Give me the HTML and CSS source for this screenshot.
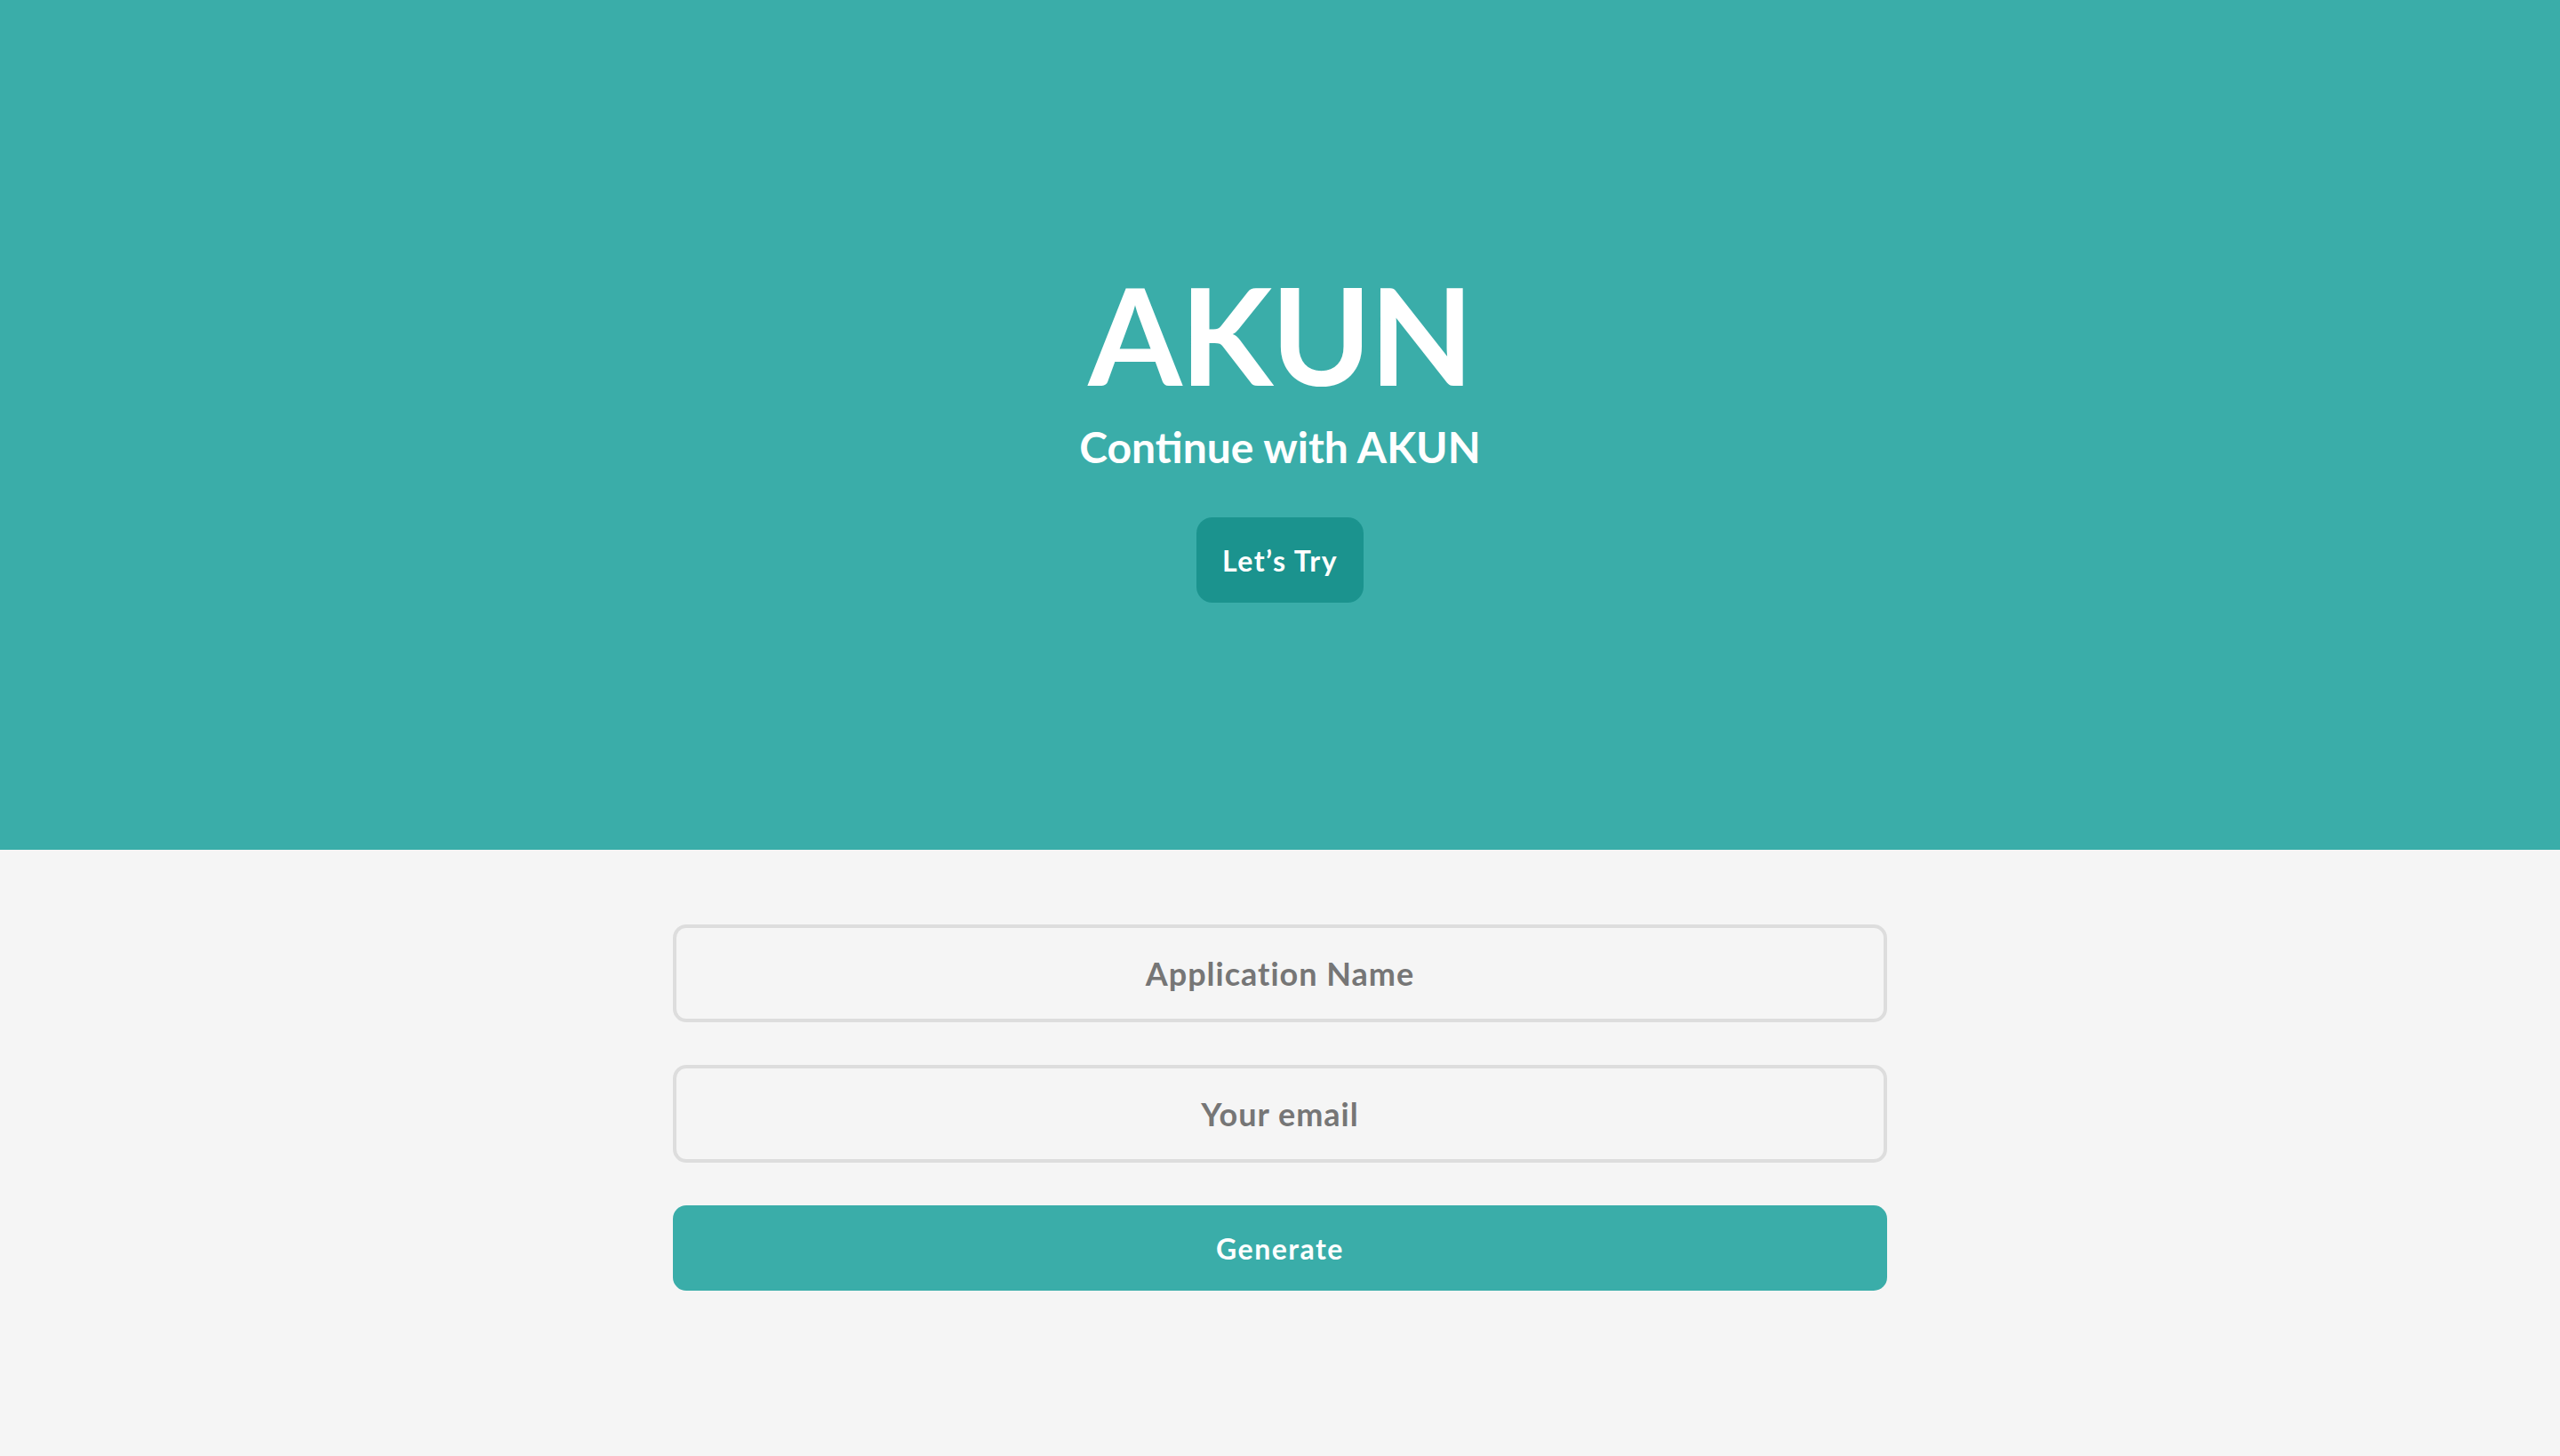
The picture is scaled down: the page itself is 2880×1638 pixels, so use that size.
FILE: index.html
```html
<!DOCTYPE html>
<html lang="en">
<head>
<meta charset="utf-8">
<title>AKUN</title>
<link rel="stylesheet" href="styles.css">
</head>
<body>
  <header class="hero">
    <h1 class="hero-title">AKUN</h1>
    <p class="hero-subtitle">Continue with AKUN</p>
    <button class="hero-btn" type="button">Let’s Try</button>
  </header>
  <main class="content">
    <form class="gen-form">
      <input class="field" type="text" placeholder="Application Name">
      <input class="field" type="email" placeholder="Your email">
      <button class="gen-btn" type="button">Generate</button>
    </form>
  </main>
</body>
</html>
```
FILE: styles.css
```css
* { box-sizing: border-box; }
html, body {
  margin: 0;
  padding: 0;
  background: #f5f5f5;
  font-family: "Lato", "Open Sans", "Liberation Sans", sans-serif;
}
.hero {
  height: 956px;
  background: #3aada9;
  display: flex;
  flex-direction: column;
  align-items: center;
  padding-top: 299px;
  color: #fff;
}
.hero-title {
  margin: 0;
  font-size: 152px;
  line-height: 1;
  font-weight: 700;
  letter-spacing: -2px;
}
.hero-subtitle {
  margin: 28px 0 0;
  font-size: 48px;
  line-height: 1;
  font-weight: 700;
}
.hero-btn {
  margin-top: 55px;
  height: 96px;
  width: 188px;
  border: none;
  border-radius: 18px;
  background: #1b938e;
  color: #fff;
  font-family: inherit;
  font-size: 32px;
  font-weight: 700;
  letter-spacing: 1.5px;
  padding: 0;
}
.content {
  display: flex;
  justify-content: center;
  padding-top: 84px;
}
.gen-form {
  width: 1366px;
  display: flex;
  flex-direction: column;
  gap: 48px;
}
.field {
  height: 110px;
  border: 4px solid #dddddd;
  border-radius: 15px;
  background: #f5f5f5;
  text-align: center;
  font-family: inherit;
  font-size: 36px;
  font-weight: 700;
  letter-spacing: 1px;
  color: #555;
  outline: none;
}
.field::placeholder {
  color: #767676;
  opacity: 1;
}
.gen-btn {
  height: 96px;
  border: none;
  border-radius: 15px;
  background: #3aada9;
  color: #fff;
  font-family: inherit;
  font-size: 32px;
  font-weight: 700;
  letter-spacing: 1.5px;
}
```
